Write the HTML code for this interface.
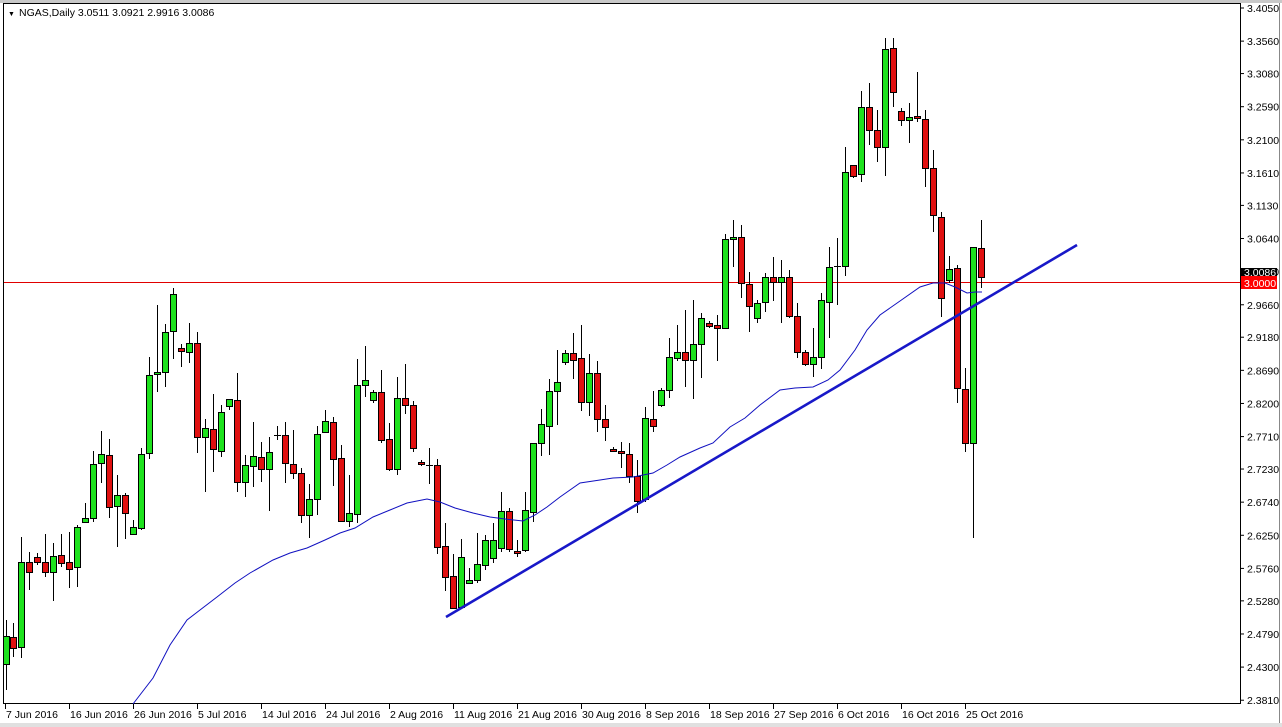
<!DOCTYPE html>
<html><head><meta charset="utf-8"><style>
html,body{margin:0;padding:0;background:#fff;width:1282px;height:727px;overflow:hidden}
svg{display:block}
text{font-family:"Liberation Sans","DejaVu Sans",sans-serif;font-size:10.5px;fill:#000}
</style></head><body>
<svg id="s" width="1282" height="727" viewBox="0 0 1282 727" xmlns="http://www.w3.org/2000/svg">
<rect x="0" y="0" width="1282" height="727" fill="#fff"/>
<rect x="0" y="0" width="1282" height="3" fill="#c8c8c8"/>
<rect x="0" y="723" width="1282" height="4" fill="#e0e0e0"/>
<line x1="3.5" y1="3" x2="3.5" y2="704" stroke="#000"/>
<line x1="3" y1="3.5" x2="1240" y2="3.5" stroke="#000"/>
<line x1="1240.5" y1="3" x2="1240.5" y2="704" stroke="#000"/>
<line x1="3" y1="703.5" x2="1241" y2="703.5" stroke="#000"/>
<line x1="1279.5" y1="3" x2="1279.5" y2="723" stroke="#888"/>
<g id="grid"></g>
<line x1="4" y1="282.5" x2="1240" y2="282.5" stroke="#e00000" stroke-width="1"/>
<g id="candles"></g>
<polyline fill="none" stroke="#1010c0" stroke-width="1" points="133,704 153,678 170,645 187,620 200,610 217,597 235,583 250,573 273,560 290,553 307,548 325,540 340,533 355,528 373,517 390,510 407,503 427,499 440,502 455,508 473,513 490,517 505,519 523,521 535,515 547,507 560,497 580,483 600,480 613,478 633,477 653,473 667,465 680,457 700,448 713,443 730,427 745,418 760,405 780,390 795,388 813,387 828,380 840,370 855,350 867,330 880,315 900,301 920,287 933,283 945,283 955,287 967,293 975,292 982,292"/>
<line x1="446" y1="617" x2="1077" y2="245" stroke="#1818c8" stroke-width="2.6"/>
<text x="8" y="16" style="font-size:7px">▼</text>
<text x="19" y="16">NGAS,Daily  3.0511 3.0921 2.9916 3.0086</text>
<g id="prices"></g>
<rect x="1241" y="268" width="36" height="9" fill="#000"/>
<text x="1244" y="276" style="fill:#fff">3.0086</text>
<rect x="1241" y="276" width="36" height="13" fill="#ff0000"/>
<text x="1244" y="287" style="fill:#fff">3.0000</text>
<g id="dates"></g>
</svg>
<script>
var NS="http://www.w3.org/2000/svg";
function el(t,a,p,txt){var e=document.createElementNS(NS,t);for(var k in a)e.setAttribute(k,a[k]);if(txt)e.textContent=txt;document.getElementById(p).appendChild(e);}
// x, bodyTop?, open y, close y, high y, low y
var C=[
[6,664,636,620,690],[13,637,648,623,657],[21,647,562,537,658],[29,562,572,552,590],[37,557,562,553,565],[45,562,572,534,577],[53,572,556,543,601],[61,555,563,534,567],[69,562,569,532,588],[77,567,527,525,587],[85,522,518,503,522],[93,518,464,451,522],[101,463,454,431,483],[109,455,507,439,518],[117,506,495,475,547],[125,495,513,493,539],[133,534,527,520,534],[141,528,454,448,530],[149,453,375,357,459],[157,374,372,305,392],[165,372,332,324,387],[173,331,294,288,359],[181,348,351,344,367],[189,352,343,323,363],[197,343,437,332,453],[205,437,428,419,492],[213,429,449,394,472],[221,451,412,405,457],[229,406,399,399,410],[237,400,482,373,492],[245,482,465,455,497],
[253,466,456,422,487],[261,457,469,442,482],[269,469,452,437,511],[277,435,436,426,440],[285,435,463,422,483],[293,464,473,430,479],[301,473,515,468,523],[309,515,499,484,538],[317,499,434,426,515],[325,432,421,410,433],[333,422,459,417,486],[341,458,521,445,522],[349,521,513,475,527],[357,514,385,359,523],[365,385,380,346,397],[373,400,392,390,403],[381,392,440,370,443],[389,439,469,423,471],[397,469,398,377,475],[405,398,405,364,414],[413,405,448,401,452],[421,462,464,460,466],[429,465,466,448,484],[437,465,547,459,554],[445,546,577,523,591],[453,576,608,554,608],[461,607,557,539,608],[469,583,580,568,583],[477,580,564,533,583],[485,565,540,535,570],
[493,558,540,523,563],[501,548,511,492,552],[509,511,549,508,552],[517,551,553,540,557],[525,550,510,492,552],[533,512,443,443,522],[541,443,424,409,456],[549,426,391,379,455],[557,391,382,350,425],[565,362,353,350,365],[573,353,360,333,379],[581,358,402,325,411],[589,402,373,354,416],[597,373,419,361,432],[605,419,427,405,441],[613,449,451,447,452],[621,451,453,442,468],[629,454,476,443,483],[637,476,501,460,513],[645,499,418,407,502],[653,419,426,391,432],[661,405,390,388,407],[669,390,357,338,398],[677,358,352,325,361],[685,352,360,310,387],[693,360,344,300,399],[701,344,318,313,378],[709,323,326,321,328],[717,325,328,315,361],
[725,328,239,234,328],[733,239,237,220,267],[741,237,283,225,298],[749,284,306,272,332],[757,318,303,300,323],[765,302,277,273,312],[773,277,282,257,301],[781,282,277,260,323],[789,277,316,270,318],[797,316,352,303,358],[805,352,364,350,366],[813,364,357,328,377],[821,357,300,293,369],[829,302,267,247,338],[837,266,266,238,305],[845,266,172,147,276],[853,165,176,165,178],[861,174,107,91,182],[869,107,130,83,145],[877,130,147,110,162],[885,147,49,38,176],[893,48,92,38,107],[901,111,120,108,126],[909,120,117,103,143],[917,116,118,72,122],[925,119,168,110,187],[933,168,215,150,232],[941,217,298,212,317],[949,280,269,256,283],[957,268,388,265,403],[965,389,443,368,452],[973,443,247,247,538],[981,248,277,220,288]
];
C.forEach(function(c){var x=c[0],o=c[1],cl=c[2],h=c[3],l=c[4];var up=cl<o;var t=Math.min(o,cl),b=Math.max(o,cl);
el("line",{x1:x+0.5,y1:h,x2:x+0.5,y2:l,stroke:"#000","stroke-width":1},"candles");
if(b-t<1.5){el("line",{x1:x-3,y1:t+0.5,x2:x+4,y2:t+0.5,stroke:"#000"},"candles");}
else el("rect",{x:x-2.5,y:t+0.5,width:6,height:b-t,fill:up?"#1ee21e":"#e01010",stroke:"#000","stroke-width":1},"candles");});
var P=["3.4050","3.3560","3.3080","3.2590","3.2100","3.1610","3.1130","3.0640","3.0150","2.9660","2.9180","2.8690","2.8200","2.7710","2.7230","2.6740","2.6250","2.5760","2.5280","2.4790","2.4300","2.3810"];
P.forEach(function(p,i){var y=8+(3.405-parseFloat(p))*676;
el("line",{x1:1240,y1:y,x2:1244,y2:y,stroke:"#000"},"prices");
el("text",{x:1247,y:y+4},"prices",p);});
var D=[["7 Jun 2016",5],["16 Jun 2016",69],["26 Jun 2016",133],["5 Jul 2016",197],["14 Jul 2016",261],["24 Jul 2016",325],["2 Aug 2016",389],["11 Aug 2016",453],["21 Aug 2016",517],["30 Aug 2016",581],["8 Sep 2016",645],["18 Sep 2016",709],["27 Sep 2016",773],["6 Oct 2016",837],["16 Oct 2016",901],["25 Oct 2016",965]];
D.forEach(function(d){el("line",{x1:d[1]+0.5,y1:704,x2:d[1]+0.5,y2:709,stroke:"#000"},"dates");
el("text",{x:d[1]+1,y:718},"dates",d[0]);});
</script>
</body></html>
